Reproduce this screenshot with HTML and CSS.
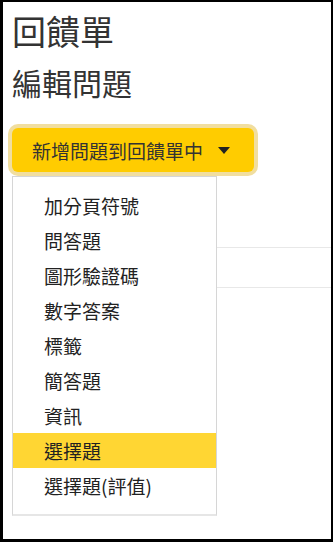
FILE: index.html
```html
<!DOCTYPE html>
<html lang="zh-Hant">
<head>
<meta charset="utf-8">
<title>回饋單</title>
<link rel="stylesheet" href="styles.css">
</head>
<body>
<div class="frame">
  <h1 class="title">回饋單</h1>
  <h2 class="subtitle">編輯問題</h2>
  <div class="dropdown">
    <button class="btn" type="button">新增問題到回饋單中<span class="caret"></span></button>
    <ul class="menu">
      <li class="item">加分頁符號</li>
      <li class="item">問答題</li>
      <li class="item">圖形驗證碼</li>
      <li class="item">數字答案</li>
      <li class="item">標籤</li>
      <li class="item">簡答題</li>
      <li class="item">資訊</li>
      <li class="item active">選擇題</li>
      <li class="item">選擇題(評值)</li>
    </ul>
  </div>
  <div class="rows">
    <div class="row"></div>
    <div class="row"></div>
  </div>
</div>
</body>
</html>
```

FILE: styles.css
```css
html, body {
  margin: 0;
  padding: 0;
  background: #fff;
}
.frame {
  box-sizing: border-box;
  width: 333px;
  height: 542px;
  border-style: solid;
  border-color: #000;
  border-width: 2px 2px 3px 3px;
  padding: 0 0 0 9px;
  font-family: "Noto Sans CJK TC", "Noto Sans", sans-serif;
  color: #333;
  overflow: hidden;
}
.title {
  margin: 0;
  padding-top: 9px;
  font-size: 34px;
  font-weight: 400;
  line-height: 40px;
  color: #333;
}
.subtitle {
  margin: 13px 0 0 0;
  font-size: 30px;
  font-weight: 400;
  line-height: 36px;
  color: #333;
}
.dropdown {
  position: relative;
  margin-top: 28px;
  height: 44px;
  z-index: 2;
}
.btn {
  box-sizing: border-box;
  display: flex;
  align-items: center;
  width: 242px;
  height: 44px;
  padding: 0 0 0 20px;
  border: none;
  border-radius: 6px;
  background: #ffcc00;
  box-shadow: 0 0 0 4px #f1de9f;
  font-family: inherit;
  font-size: 19px;
  color: #333;
  line-height: 1;
}
.caret {
  margin-left: 15px;
  width: 0;
  height: 0;
  border-left: 6px solid transparent;
  border-right: 6px solid transparent;
  border-top: 7px solid #222;
}
.menu {
  position: absolute;
  left: 0;
  top: 48px;
  box-sizing: border-box;
  width: 205px;
  margin: 0;
  padding: 11px 0 11px 0;
  list-style: none;
  background: #fff;
  border: 1px solid #d6d6d6;
  border-bottom: 2px solid #e6e6e6;
}
.item {
  height: 35px;
  line-height: 35px;
  padding-left: 31px;
  font-size: 19px;
  color: #222;
  white-space: nowrap;
}
.item.active {
  background: #ffd633;
}
.rows {
  margin-top: 36px;
  margin-right: 0;
}
.row {
  height: 39px;
  border-bottom: 1px solid #e8e8e8;
}
```
